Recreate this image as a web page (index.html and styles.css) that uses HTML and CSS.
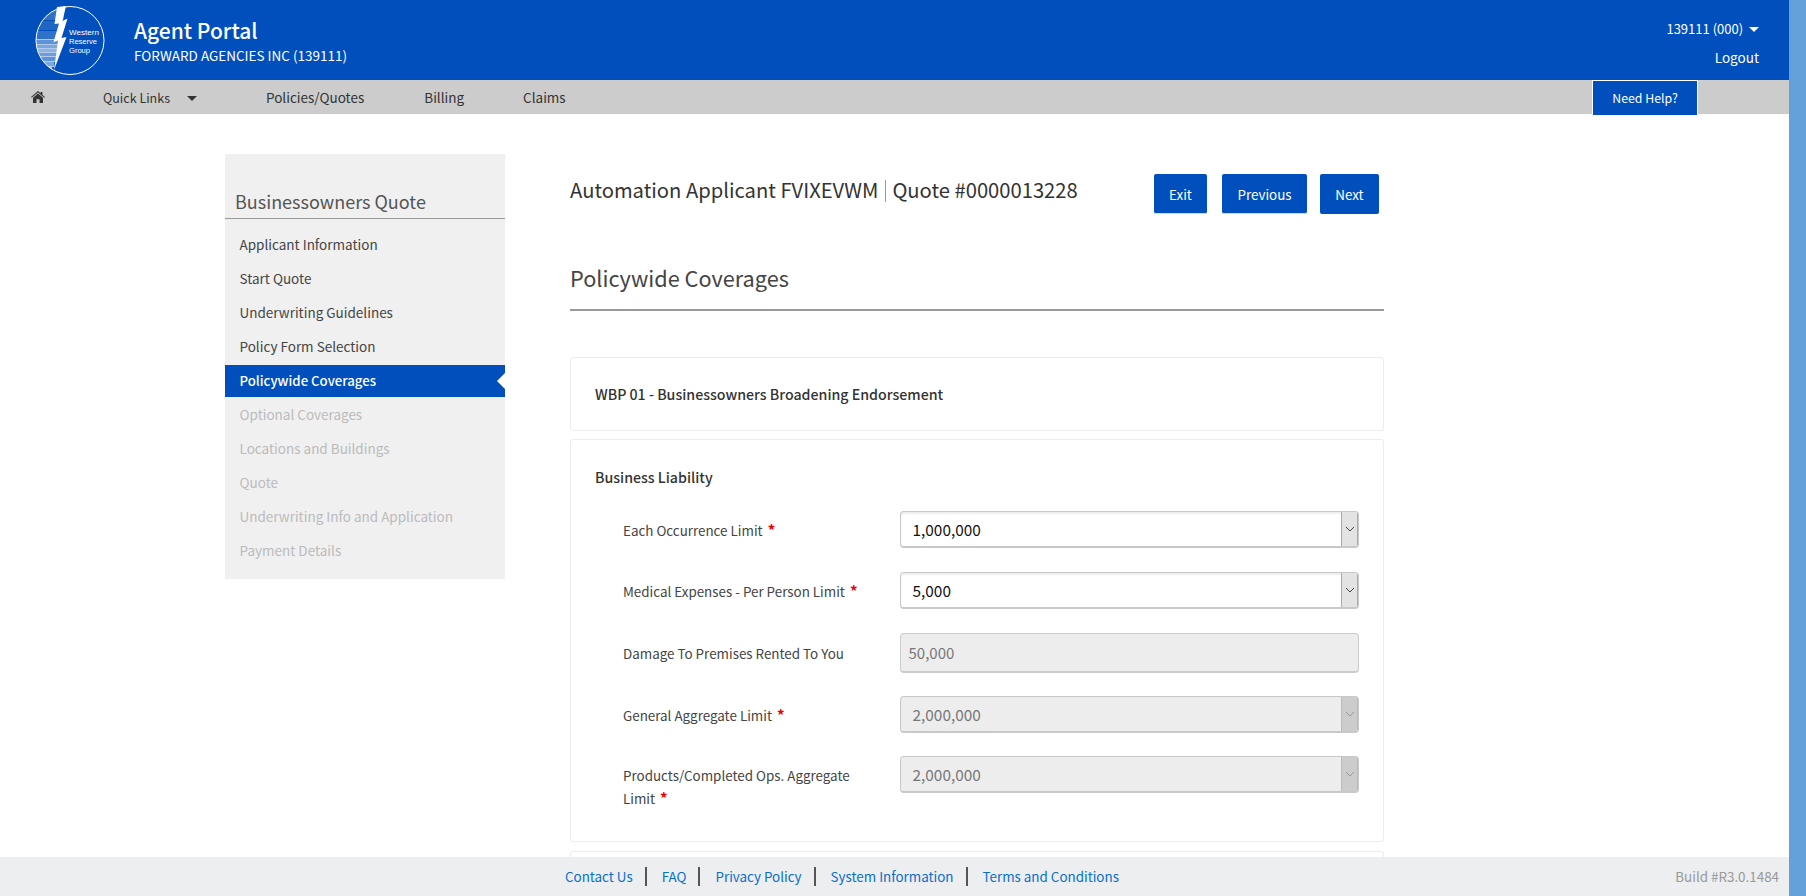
FILE: index.html
```html
<!DOCTYPE html>
<html lang="en">
<head>
    <meta charset="UTF-8">
    <meta name="viewport" content="width=device-width, initial-scale=1.0">
    <title>Agent Portal | Policywide Coverages</title>
    <link rel="stylesheet" href="styles.css">
</head>
<body>
    <div class="page">
        <header class="header">
            <svg class="logo" viewBox="0 0 100 80" width="100" height="80" role="img" aria-label="Western Reserve Group">
                <defs>
                    <clipPath id="logoClip"><circle cx="50" cy="40.5" r="34"></circle></clipPath>
                </defs>
                <g clip-path="url(#logoClip)">
                    <rect x="16" y="10" width="28" height="10" fill="#2f72c8"></rect>
                    <rect x="16" y="21" width="24" height="9" fill="#1f66c2"></rect>
                    <rect x="16" y="31" width="24" height="8" fill="#2f72c8"></rect>
                    <rect x="16" y="40" width="24" height="4" fill="#5e93d6"></rect>
                    <rect x="16" y="45" width="24" height="3" fill="#7ba7df"></rect>
                    <rect x="16" y="49" width="24" height="3" fill="#8cb3e4"></rect>
                    <rect x="16" y="53" width="20" height="3" fill="#6c9cdb"></rect>
                    <rect x="16" y="57" width="20" height="4" fill="#5e93d6"></rect>
                    <rect x="16" y="62" width="18" height="4" fill="#7ba7df"></rect>
                    <rect x="16" y="67" width="16" height="4" fill="#a8c6eb"></rect>
                    <path d="M16 39.5h24M16 44.5h24M16 48.5h24M16 52.5h24M16 56.5h20M16 61.5h20M16 66.5h18" stroke="#fff" stroke-width="0.7"></path>
                </g>
                <path class="logo-bolt" d="M37 7 L46 6 L42.5 21 L47.5 18.5 L41.5 38 L46.5 37 L34 70 L38 40.5 L33.5 42 L39 23.5 L34.5 24 Z"></path>
                <circle class="logo-ring" cx="50" cy="40.5" r="34"></circle>
                <text class="logo-text" x="49" y="35" textLength="30" lengthAdjust="spacingAndGlyphs">Western</text>
                <text class="logo-text" x="49" y="44" textLength="28" lengthAdjust="spacingAndGlyphs">Reserve</text>
                <text class="logo-text" x="49" y="53" textLength="21" lengthAdjust="spacingAndGlyphs">Group</text>
            </svg>
            <div class="brand">
                <div class="brand-title">Agent Portal</div>
                <div class="brand-sub">FORWARD AGENCIES INC (139111)</div>
            </div>
            <div class="account">
                <div class="account-id">139111 (000) <span class="caret caret-white"></span></div>
                <div class="account-logout">Logout</div>
            </div>
        </header>

        <nav class="nav">
            <svg class="home-icon" viewBox="0 0 14 12" width="14" height="12" aria-hidden="true">
                <path d="M7 0 L9.6 2.2 V1 H11.4 V3.7 L14 5.9 L13.3 6.7 L7 1.5 L0.7 6.7 L0 5.9 Z"></path>
                <path d="M7 2.6 L12 6.7 V12 H8.5 V8.3 H5.5 V12 H2 V6.7 Z"></path>
            </svg>
            <a class="nav-link nav-quick">Quick Links</a>
            <span class="caret caret-dark"></span>
            <a class="nav-link nav-policies">Policies/Quotes</a>
            <a class="nav-link nav-billing">Billing</a>
            <a class="nav-link nav-claims">Claims</a>
            <a class="need-help">Need Help?</a>
        </nav>

        <div class="layout">
            <aside class="sidebar">
                <h2 class="sidebar-title">Businessowners Quote</h2>
                <ul class="steps">
                    <li class="step">Applicant Information</li>
                    <li class="step">Start Quote</li>
                    <li class="step">Underwriting Guidelines</li>
                    <li class="step">Policy Form Selection</li>
                    <li class="step step-active">Policywide Coverages</li>
                    <li class="step step-off">Optional Coverages</li>
                    <li class="step step-off">Locations and Buildings</li>
                    <li class="step step-off">Quote</li>
                    <li class="step step-off">Underwriting Info and Application</li>
                    <li class="step step-off">Payment Details</li>
                </ul>
            </aside>

            <main class="main">
                <div class="quote-bar">
                    <div class="quote-title">Automation Applicant FVIXEVWM <span class="quote-sep"></span> Quote #0000013228</div>
                    <div class="quote-actions">
                        <button class="btn btn-exit">Exit</button>
                        <button class="btn btn-prev">Previous</button>
                        <button class="btn btn-next">Next</button>
                    </div>
                </div>

                <h1 class="page-title">Policywide Coverages</h1>

                <section class="card card-short">
                    <h3 class="card-title">WBP 01 - Businessowners Broadening Endorsement</h3>
                </section>

                <section class="card card-form">
                    <h3 class="card-title">Business Liability</h3>

                    <div class="field field-first">
                        <label class="field-label">Each Occurrence Limit <span class="req">*</span></label>
                        <div class="select">
                            <span class="select-value">1,000,000</span>
                            <span class="select-arrow"><svg viewBox="0 0 10 6" width="10" height="6"><path d="M1 1 L5 5 L9 1"></path></svg></span>
                        </div>
                    </div>

                    <div class="field">
                        <label class="field-label">Medical Expenses - Per Person Limit <span class="req">*</span></label>
                        <div class="select">
                            <span class="select-value">5,000</span>
                            <span class="select-arrow"><svg viewBox="0 0 10 6" width="10" height="6"><path d="M1 1 L5 5 L9 1"></path></svg></span>
                        </div>
                    </div>

                    <div class="field">
                        <label class="field-label field-label-input">Damage To Premises Rented To You</label>
                        <div class="input-off">50,000</div>
                    </div>

                    <div class="field field-tight">
                        <label class="field-label">General Aggregate Limit <span class="req">*</span></label>
                        <div class="select select-off">
                            <span class="select-value">2,000,000</span>
                            <span class="select-arrow"><svg viewBox="0 0 10 6" width="10" height="6"><path d="M1 1 L5 5 L9 1"></path></svg></span>
                        </div>
                    </div>

                    <div class="field field-tight">
                        <label class="field-label">Products/Completed Ops. Aggregate<br>Limit <span class="req">*</span></label>
                        <div class="select select-off">
                            <span class="select-value">2,000,000</span>
                            <span class="select-arrow"><svg viewBox="0 0 10 6" width="10" height="6"><path d="M1 1 L5 5 L9 1"></path></svg></span>
                        </div>
                    </div>
                </section>

                <section class="card card-next"></section>
            </main>
        </div>

        <footer class="footer">
            <div class="footer-links">
                <a class="footer-link">Contact Us</a>
                <a class="footer-link">FAQ</a>
                <a class="footer-link">Privacy Policy</a>
                <a class="footer-link">System Information</a>
                <a class="footer-link">Terms and Conditions</a>
            </div>
            <div class="build">Build #R3.0.1484</div>
        </footer>
    </div>
    <div class="side-strip"></div>
</body>
</html>
```

FILE: styles.css
```css
* {
    box-sizing: border-box;
}

html, body {
    height: 100%;
}

body {
    margin: 0;
    display: flex;
    overflow: hidden;
    background: #fff;
    color: #444;
    font-family: "Noto Sans CJK SC", "Noto Sans", Arial, sans-serif;
    font-size: 13.5px;
    line-height: 23px;
}

.page {
    position: relative;
    flex: 1;
    height: 100vh;
    overflow: hidden;
}

.side-strip {
    width: 17px;
    background: #64a0da;
}

/* header */
.header {
    display: flex;
    align-items: flex-start;
    height: 80px;
    padding-left: 20px;
    background: #004fbd;
    color: #fff;
}

.logo {
    flex: none;
}

.logo-bolt {
    fill: #fff;
}

.logo-ring {
    fill: none;
    stroke: #fff;
    stroke-width: 1;
}

.logo-text {
    fill: #fff;
    font-family: "Liberation Sans", Arial, sans-serif;
    font-size: 7.8px;
}

.brand {
    margin-left: 14px;
    padding-top: 16px;
}

.brand-title {
    font-size: 21px;
    line-height: 29px;
    font-weight: 500;
}

.brand-sub {
    font-size: 13.5px;
    line-height: 20px;
}

.account {
    margin-left: auto;
    padding: 17px 30px 0 0;
    font-size: 13.5px;
    text-align: right;
}

.account-id {
    font-size: 13px;
    line-height: 23px;
}

.account-logout {
    margin-top: 6px;
    line-height: 23px;
}

.caret {
    display: inline-block;
    width: 0;
    height: 0;
    border-left: 5px solid transparent;
    border-right: 5px solid transparent;
    border-top: 5px solid #fff;
    vertical-align: 2px;
    margin-left: 3px;
}

.caret-dark {
    border-top-color: #333;
    margin-left: 17px;
    margin-top: 3px;
}

/* nav */
.nav {
    display: flex;
    align-items: center;
    height: 34px;
    padding-left: 31px;
    background: #ccc;
    color: #333;
}

.home-icon {
    fill: #333;
    flex: none;
}

.nav-quick {
    margin-left: 58px;
    font-size: 12.5px;
}

.nav-policies {
    margin-left: 69px;
}

.nav-billing {
    margin-left: 60px;
}

.nav-claims {
    margin-left: 59px;
}

.need-help {
    position: relative;
    display: flex;
    align-items: center;
    justify-content: center;
    align-self: flex-start;
    width: 106px;
    height: 35px;
    margin-left: auto;
    margin-right: 91px;
    background: #004fbd;
    border: 1px solid #fff;
    border-bottom: 0;
    color: #fff;
    font-size: 12.3px;
}

/* layout */
.layout {
    display: flex;
    align-items: flex-start;
    padding: 40px 0 0 225px;
}

.sidebar {
    flex: none;
    width: 280px;
    height: 425px;
    background: #f0f0f0;
}

.sidebar-title {
    margin: 0;
    height: 65px;
    padding: 32px 0 0 10px;
    border-bottom: 1px solid #999;
    color: #555;
    font-size: 18px;
    font-weight: 400;
    line-height: 30px;
}

.steps {
    list-style: none;
    margin: 10px 0 0;
    padding: 0;
}

.step {
    position: relative;
    height: 32px;
    margin-bottom: 2px;
    padding-left: 14.5px;
    color: #444;
    line-height: 30px;
}

.step-active {
    background: #004fbd;
    color: #fff;
    font-size: 13.2px;
    font-weight: 500;
    line-height: 32px;
}

/* little notch on the active step */
.step-active::after {
    content: "";
    position: absolute;
    right: 0;
    top: 8px;
    border-top: 8px solid transparent;
    border-bottom: 8px solid transparent;
    border-right: 8px solid #fff;
}

.step-off {
    color: #bbb;
}

/* main */
.main {
    flex: none;
    width: 814px;
    margin-left: 65px;
}

.quote-bar {
    display: flex;
    align-items: flex-start;
    justify-content: space-between;
    padding: 20px 5px 0 0;
    height: 60px;
}

.quote-title {
    color: #333;
    font-size: 20.2px;
    line-height: 36px;
    margin-top: -2px;
}

.quote-sep {
    display: inline-block;
    width: 1px;
    height: 22px;
    margin: 0 2px;
    background: #999;
    vertical-align: -4px;
}

.quote-actions {
    display: flex;
    align-items: flex-start;
    gap: 15px;
}

.btn {
    height: 40px;
    padding: 0;
    border: 0;
    border-radius: 2px;
    background: #004fbd;
    color: #fff;
    font-family: inherit;
    font-size: 13.4px;
}

.btn-exit {
    width: 53px;
    border-bottom: 1px solid #d8d8d8;
}

.btn-prev {
    width: 85px;
    margin-right: -2px;
    border-bottom: 1px solid #d8d8d8;
}

.btn-next {
    width: 59px;
}

.page-title {
    margin: 46px 0 0;
    height: 51px;
    border-bottom: 2px solid #999;
    color: #444;
    font-size: 21.7px;
    font-weight: 400;
    line-height: 36px;
}

.card {
    border: 1px solid #ececec;
    border-radius: 3px;
    background: #fff;
}

.card-short {
    display: flex;
    align-items: center;
    height: 74px;
    margin-top: 46px;
    padding-left: 24px;
}

.card-title {
    margin: 0;
    color: #333;
    font-size: 14.2px;
    font-weight: 500;
    line-height: 24px;
}

.card-form {
    height: 403px;
    margin-top: 8px;
    padding: 25px 24px 0 24px;
}

.card-next {
    height: 60px;
    margin-top: 9px;
}

.field {
    display: flex;
    align-items: flex-start;
    padding-left: 28px;
    margin-top: 24px;
}

.field-first {
    margin-top: 22px;
}

.field-tight {
    margin-top: 23px;
}

.field-label {
    flex: none;
    width: 277px;
    padding: 7.5px 30px 0 0;
    color: #444;
    font-size: 13.4px;
    line-height: 23px;
}

.field-label-input {
    padding-top: 9px;
}

.req {
    display: inline-block;
    color: #e00;
    margin-left: 2px;
    font-size: 15px;
    font-weight: 700;
    line-height: 14px;
}

.select {
    display: flex;
    flex: 1;
    height: 37px;
    border: 1px solid #c8c8c8;
    border-bottom-width: 2px;
    border-radius: 4px;
    background: #fff;
    box-shadow: inset 0 2px 2px #eee;
    color: #111;
    overflow: hidden;
}

.select-value {
    flex: 1;
    padding-left: 11.5px;
    font-size: 15.4px;
    line-height: 35px;
}

.select-arrow {
    display: flex;
    align-items: center;
    justify-content: center;
    width: 17px;
    background: #e3e3e3;
    border-left: 1px solid #aaa;
    border-right: 1px solid #aaa;
}

.select-arrow path {
    fill: none;
    stroke: #444;
    stroke-width: 1;
}

.select-off {
    background: #ededed;
    color: #777;
    box-shadow: none;
}

.select-off .select-arrow {
    background: #ccc;
    border-left-color: #bbb;
    border-right-color: #bbb;
}

.select-off .select-arrow path {
    stroke: #999;
}

.input-off {
    flex: 1;
    height: 40px;
    padding-left: 7.5px;
    border: 1px solid #ccc;
    border-bottom-width: 2px;
    border-radius: 4px;
    background: #ededed;
    color: #777;
    font-size: 15px;
    line-height: 38px;
}

/* footer sits over the page */
.footer {
    position: absolute;
    left: 0;
    right: 0;
    bottom: 0;
    display: flex;
    align-items: center;
    justify-content: space-between;
    height: 39px;
    padding: 0 10px 0 565px;
    background: #eceef0;
}

.footer-links {
    display: flex;
    align-items: center;
}

.footer-link {
    padding: 0 12px 0 15px;
    border-left: 2px solid #555;
    color: #0a6fc9;
    font-size: 13.4px;
    line-height: 19px;
}

.footer-link:first-child {
    padding-left: 0;
    border-left: 0;
}

.build {
    color: #999;
    font-size: 13.4px;
}
```
